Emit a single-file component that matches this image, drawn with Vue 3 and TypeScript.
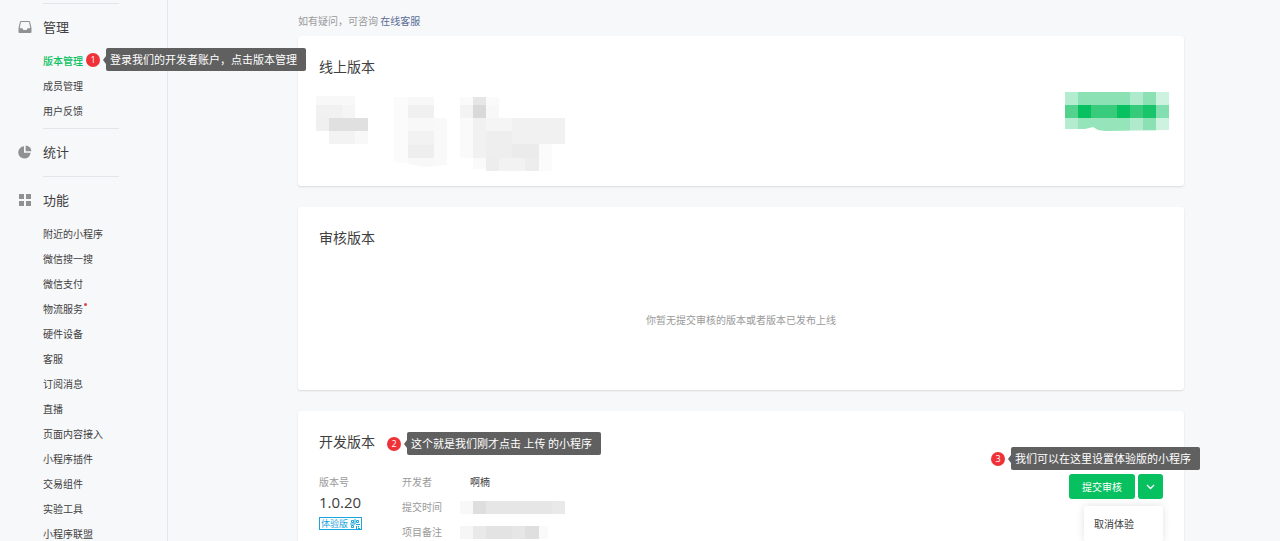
<script setup lang="ts">
interface NavItem {
  label: string
  active?: boolean
  dot?: boolean
  note?: string
}
interface NavGroup {
  icon: 'tray' | 'pie' | 'grid'
  title: string
  items: NavItem[]
}
type Cell = [x: number, y: number, w: number, h: number, fill: string]

const groups: NavGroup[] = [
  {
    icon: 'tray',
    title: '管理',
    items: [
      { label: '版本管理', active: true, note: '登录我们的开发者账户，点击版本管理' },
      { label: '成员管理' },
      { label: '用户反馈' },
    ],
  },
  { icon: 'pie', title: '统计', items: [] },
  {
    icon: 'grid',
    title: '功能',
    items: [
      { label: '附近的小程序' },
      { label: '微信搜一搜' },
      { label: '微信支付' },
      { label: '物流服务', dot: true },
      { label: '硬件设备' },
      { label: '客服' },
      { label: '订阅消息' },
      { label: '直播' },
      { label: '页面内容接入' },
      { label: '小程序插件' },
      { label: '交易组件' },
      { label: '实验工具' },
      { label: '小程序联盟' },
    ],
  },
]

const versionCells: Cell[] = [
  [0, 4, 39, 9, '#f8f8f8'],
  [0, 13, 26, 13, '#f1f1f1'],
  [26, 13, 13, 13, '#f5f5f5'],
  [0, 26, 13, 13, '#f0f0f0'],
  [13, 26, 39, 13, '#e0e0e0'],
  [13, 39, 26, 13, '#f3f3f3'],
  [39, 39, 13, 13, '#f8f8f8'],
]
const labelCells: Cell[] = [
  [0, 5, 14, 66, '#fbfbfb'],
  [14, 5, 26, 8, '#f8f8f8'],
  [14, 13, 26, 13, '#f0f0f0'],
  [14, 26, 26, 13, '#f8f8f8'],
  [40, 26, 13, 48, '#f9f9f9'],
  [14, 39, 26, 14, '#f2f2f2'],
  [14, 53, 26, 13, '#eeeeee'],
  [14, 66, 26, 9, '#f8f8f8'],
]
const detailCells: Cell[] = [
  [0, 5, 13, 8, '#fafafa'],
  [13, 5, 13, 8, '#e6e6e6'],
  [26, 5, 13, 8, '#fafafa'],
  [0, 13, 13, 13, '#f3f3f3'],
  [13, 13, 13, 13, '#d9d9d9'],
  [26, 13, 13, 13, '#f8f8f8'],
  [0, 26, 13, 40, '#fafafa'],
  [13, 26, 13, 40, '#f1f1f1'],
  [26, 26, 26, 13, '#f5f5f5'],
  [52, 26, 53, 13, '#f1f1f1'],
  [26, 39, 26, 27, '#eeeeee'],
  [52, 39, 53, 13, '#f1f1f1'],
  [52, 52, 27, 14, '#ebebeb'],
  [79, 52, 13, 27, '#fbfbfb'],
  [13, 66, 13, 11, '#fafafa'],
  [26, 66, 13, 13, '#ededed'],
  [39, 66, 26, 13, '#f2f2f2'],
  [65, 66, 14, 13, '#ededed'],
]
const greenRows = [
  ['#b3ecce', '#8be1b4', '#8be1b4', '#8be1b4', '#8be1b4', '#aeeacb', '#8be1b4', '#cdf2df'],
  ['#53d28e', '#07c160', '#38cb7c', '#38cb7c', '#07c160', '#36cb7a', '#18c56a', '#84dfb0'],
  ['#b3ecce', '#95e4ba', '#95e4ba', '#95e4ba', '#95e4ba', '#aeeacb', '#8be1b4', '#cdf2df'],
]
const greenCells: Cell[] = greenRows.flatMap((row, r) =>
  row.map((fill, c): Cell => [c * 13, r * 13, 13, 13, fill]),
)
const timeCells: Cell[] = [
  [0, 0, 13, 13, '#f8f8f8'],
  [13, 0, 13, 13, '#dedede'],
  [26, 0, 66, 13, '#e6e6e6'],
  [92, 0, 13, 13, '#e9e9e9'],
]
const remarkCells: Cell[] = [
  [0, 0, 13, 13, '#f6f6f6'],
  [13, 0, 13, 13, '#e9e9e9'],
  [26, 0, 26, 13, '#e3e3e3'],
  [52, 0, 13, 13, '#e6e6e6'],
  [65, 0, 14, 13, '#dfdfdf'],
  [79, 0, 9, 13, '#fafafa'],
]
</script>

<template>
  <div class="page">
    <nav class="sidebar" aria-label="主导航">
      <section v-for="group in groups" :key="group.title" class="group">
        <h2 class="group-title">
          <svg v-if="group.icon === 'tray'" class="icon" viewBox="0 0 14 14" aria-hidden="true">
            <path
              fill="#8f9193"
              fill-rule="evenodd"
              d="M3 1h8a1 1 0 0 1 1 .8L13.500 8v4a1 1 0 0 1-1 1h-11a1 1 0 0 1-1-1V8L2 1.800A1 1 0 0 1 3 1zM3 2.100L1.700 8.200H4.500L5.300 10h3.400l.8-1.800h2.800L11 2.100z"
            />
          </svg>
          <svg v-else-if="group.icon === 'pie'" class="icon" viewBox="0 0 14 14" aria-hidden="true">
            <path fill="#8f9193" d="M6 1.200V7.800H12.600A6.200 6.200 0 1 1 6 1.200z" />
            <path fill="#8f9193" d="M7.600 0.500A6 6 0 0 1 13.400 6.300H7.600z" />
          </svg>
          <svg v-else class="icon" viewBox="0 0 14 14" aria-hidden="true">
            <path fill="#8f9193" d="M1 1h5v5H1zM8 1h5v5H8zM1 8h5v5H1zM8 8h5v5H8z" />
          </svg>
          {{ group.title }}
        </h2>
        <ul v-if="group.items.length" class="links">
          <li v-for="item in group.items" :key="item.label">
            <a href="#" :class="{ active: item.active, dot: item.dot }">{{ item.label }}</a>
            <div v-if="item.note" class="callout callout-nav">
              <span class="num">1</span><span class="tip">{{ item.note }}</span>
            </div>
          </li>
        </ul>
      </section>
    </nav>

    <main class="content">
      <p class="help">如有疑问，可咨询 <a href="#">在线客服</a></p>

      <section class="card online">
        <h3>线上版本</h3>
        <div class="online-row">
          <svg width="53" height="80" aria-hidden="true">
            <rect v-for="(c, i) in versionCells" :key="i" :x="c[0]" :y="c[1]" :width="c[2]" :height="c[3]" :fill="c[4]" />
          </svg>
          <svg width="53" height="80" aria-hidden="true">
            <rect v-for="(c, i) in labelCells" :key="i" :x="c[0]" :y="c[1]" :width="c[2]" :height="c[3]" :fill="c[4]" />
            <path d="M0 70L32 75L53 73V80H0z" fill="#fff" />
          </svg>
          <svg width="105" height="80" aria-hidden="true">
            <rect v-for="(c, i) in detailCells" :key="i" :x="c[0]" :y="c[1]" :width="c[2]" :height="c[3]" :fill="c[4]" />
          </svg>
          <svg class="push" width="105" height="40" aria-hidden="true">
            <rect v-for="(c, i) in greenCells" :key="i" :x="c[0]" :y="c[1]" :width="c[2]" :height="c[3]" :fill="c[4]" />
            <path d="M0 37L20 37L28 35L33 38L40 39L104 38V40H0z" fill="#fff" />
          </svg>
        </div>
      </section>

      <section class="card review">
        <h3>审核版本</h3>
        <p class="empty">你暂无提交审核的版本或者版本已发布上线</p>
      </section>

      <section class="card dev">
        <div class="title-row">
          <h3>开发版本</h3>
          <div class="callout">
            <span class="num">2</span><span class="tip">这个就是我们刚才点击 上传 的小程序</span>
          </div>
        </div>
        <div class="dev-row">
          <div class="version">
            <span class="label">版本号</span>
            <strong>1.0.20</strong>
            <span class="badge">
              体验版
              <svg width="10" height="10" viewBox="0 0 10 10" aria-hidden="true">
                <path
                  fill="none"
                  stroke="#1ba5dc"
                  d="M1.500 1.500h2v2h-2zM6.500 1.500h2v2h-2zM1.500 6.500h2v2h-2zM5 0v5H0M6 5.500h4M6.500 7v3M8.500 7v1.500M8 9.500h2"
                />
              </svg>
            </span>
          </div>
          <dl class="meta">
            <dt>开发者</dt>
            <dd><span>啊楠</span></dd>
            <dt>提交时间</dt>
            <dd>
              <svg width="105" height="13" aria-hidden="true">
                <rect v-for="(c, i) in timeCells" :key="i" :x="c[0]" :y="c[1]" :width="c[2]" :height="c[3]" :fill="c[4]" />
              </svg>
            </dd>
            <dt>项目备注</dt>
            <dd>
              <svg width="105" height="13" aria-hidden="true">
                <rect v-for="(c, i) in remarkCells" :key="i" :x="c[0]" :y="c[1]" :width="c[2]" :height="c[3]" :fill="c[4]" />
              </svg>
            </dd>
          </dl>
          <div class="actions">
            <button type="button" class="submit">提交审核</button>
            <button type="button" class="more" aria-label="更多操作">
              <svg width="9" height="6" viewBox="0 0 9 6" aria-hidden="true">
                <path d="M1 1l3.500 3.500L8 1" fill="none" stroke="#fff" stroke-width="1.300" />
              </svg>
            </button>
            <div class="menu">
              <button type="button">取消体验</button>
            </div>
            <div class="callout callout-action">
              <span class="num">3</span><span class="tip">我们可以在这里设置体验版的小程序</span>
            </div>
          </div>
        </div>
      </section>
    </main>
  </div>
</template>

<style>
body {
  margin: 0;
  background: #f7f8fa;
}
</style>

<style scoped>
.page {
  display: flex;
  height: 100vh;
  overflow: hidden;
  background: #f7f8fa;
  color: #404040;
  font: 10px/20px "Noto Sans CJK SC", sans-serif;
}
h2,
h3,
p,
ul,
dl,
dd {
  margin: 0;
  padding: 0;
  font-weight: 400;
}
a {
  color: inherit;
  text-decoration: none;
}
button {
  border: 0;
  padding: 0;
  font: inherit;
  cursor: pointer;
}
svg {
  display: block;
}

.sidebar {
  position: relative;
  z-index: 1;
  flex: none;
  box-sizing: border-box;
  width: 168px;
  padding: 3px 48px 0 18px;
  border-right: 1px solid #e6e7ea;
}
.group::before {
  content: "";
  display: block;
  height: 1px;
  margin: 0 0 13px 25px;
  background: #e4e5e8;
}
.group-title {
  display: flex;
  align-items: center;
  gap: 11px;
  padding-bottom: 14px;
  font-size: 13px;
}
.icon {
  width: 14px;
  height: 14px;
}
.links {
  margin: -3px 0 0 25px;
  padding-bottom: 5px;
  list-style: none;
  line-height: 25px;
}
.links li {
  position: relative;
}
.links .active {
  color: #07c160;
  font-weight: 500;
}
.dot::after {
  content: "";
  display: inline-block;
  width: 3px;
  height: 3px;
  margin-left: 1px;
  border-radius: 50%;
  background: #e6434b;
  vertical-align: 7px;
}

.content {
  flex: 1;
  min-width: 0;
  padding: 11px 96px 0 130px;
}
.help {
  margin-bottom: 5px;
  color: #9a9a9a;
}
.help a {
  color: #576b95;
}
.card {
  box-sizing: border-box;
  margin-bottom: 21px;
  padding: 21px;
  border-radius: 3px;
  background: #fff;
  box-shadow: 0 1px 2px rgba(0, 0, 0, 0.12);
}
h3 {
  padding-bottom: 2px;
  font-size: 14px;
  line-height: 18px;
}
.online {
  padding-bottom: 14px;
}
.online-row {
  display: flex;
  gap: 13px;
  margin: 15px -7px 0 -3px;
}
.online-row svg:first-child {
  margin-right: 12px;
}
.online-row .push {
  margin-left: auto;
}
.review {
  padding-bottom: 60px;
}
.empty {
  margin-top: 62px;
  color: #9a9a9a;
  text-align: center;
}
.title-row {
  display: flex;
  align-items: flex-start;
  gap: 12px;
  height: 20px;
}
.dev-row {
  display: flex;
  align-items: flex-start;
  margin-top: 20px;
}
.version {
  display: flex;
  flex-direction: column;
  align-items: flex-start;
  width: 83px;
}
.label,
dt {
  color: #9a9a9a;
}
.version strong {
  font: 400 15px/20px "Open Sans", "Noto Sans CJK SC", sans-serif;
}
.badge {
  display: flex;
  align-items: center;
  gap: 2px;
  margin-top: 5px;
  padding: 0 1px;
  border: 1px solid #1ba5dc;
  color: #1ba5dc;
  font-size: 9px;
  line-height: 11px;
}
.meta {
  display: grid;
  grid-template-columns: 58px auto;
  row-gap: 5px;
}
dd {
  display: flex;
  align-items: center;
}
dd span {
  padding-left: 10px;
}
.actions {
  position: relative;
  display: flex;
  gap: 3px;
  margin: 2px 0 0 auto;
}
.submit,
.more {
  height: 25px;
  border-radius: 3px;
  background: #07c160;
  color: #fff;
}
.submit {
  padding: 0 13px;
}
.more {
  display: flex;
  align-items: center;
  justify-content: center;
  width: 25px;
}
.menu {
  position: absolute;
  top: 32px;
  right: 0;
  width: 79px;
  padding: 5px 0;
  border-radius: 2px;
  background: #fff;
  box-shadow: 0 0 8px rgba(0, 0, 0, 0.12);
}
.menu button {
  width: 100%;
  padding: 0 10px;
  background: none;
  color: #404040;
  line-height: 25px;
  text-align: left;
}

.callout {
  display: flex;
  align-items: center;
  gap: 6px;
  white-space: nowrap;
}
.num {
  width: 14px;
  border-radius: 50%;
  background: #ee3237;
  color: #fff;
  font: 9px/14px "Open Sans", sans-serif;
  text-align: center;
}
.tip {
  position: relative;
  padding: 0 9px 0 4px;
  border-radius: 2px;
  background: #606060;
  color: #fff;
  font-size: 11px;
  line-height: 23px;
}
.tip::before {
  content: "";
  position: absolute;
  top: 8px;
  left: -3px;
  border: solid transparent;
  border-width: 4px 3px 4px 0;
  border-right-color: #606060;
}
.callout-nav {
  position: absolute;
  top: 0;
  left: 43px;
}
.callout-action {
  position: absolute;
  top: -27px;
  right: -37px;
}
</style>
